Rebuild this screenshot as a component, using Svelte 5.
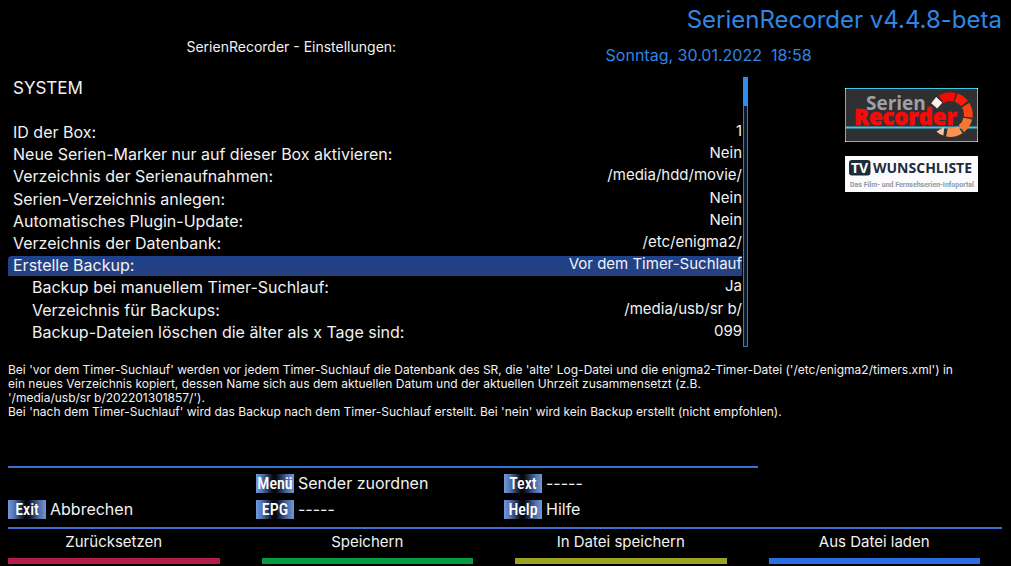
<script>
  const settings = [
    { label: 'ID der Box:', value: '1' },
    { label: 'Neue Serien-Marker nur auf dieser Box aktivieren:', value: 'Nein' },
    { label: 'Verzeichnis der Serienaufnahmen:', value: '/media/hdd/movie/' },
    { label: 'Serien-Verzeichnis anlegen:', value: 'Nein' },
    { label: 'Automatisches Plugin-Update:', value: 'Nein' },
    { label: 'Verzeichnis der Datenbank:', value: '/etc/enigma2/' },
    { label: 'Erstelle Backup:', value: 'Vor dem Timer-Suchlauf' },
    { label: 'Backup bei manuellem Timer-Suchlauf:', value: 'Ja', child: true },
    { label: 'Verzeichnis für Backups:', value: '/media/usb/sr b/', child: true },
    { label: 'Backup-Dateien löschen die älter als x Tage sind:', value: '099', child: true },
  ];
  let selected = $state(6);

  const help = [
    "Bei 'vor dem Timer-Suchlauf' werden vor jedem Timer-Suchlauf die Datenbank des SR, die 'alte' Log-Datei und die enigma2-Timer-Datei ('/etc/enigma2/timers.xml') in",
    'ein neues Verzeichnis kopiert, dessen Name sich aus dem aktuellen Datum und der aktuellen Uhrzeit zusammensetzt (z.B.',
    "'/media/usb/sr b/202201301857/').",
    "Bei 'nach dem Timer-Suchlauf' wird das Backup nach dem Timer-Suchlauf erstellt. Bei 'nein' wird kein Backup erstellt (nicht empfohlen).",
  ];

  const keys = [
    null,
    { key: 'Menü', action: 'Sender zuordnen' },
    { key: 'Text', action: '-----' },
    { key: 'Exit', action: 'Abbrechen' },
    { key: 'EPG', action: '-----' },
    { key: 'Help', action: 'Hilfe' },
  ];

  const actions = [
    { text: 'Zurücksetzen', tone: 'red' },
    { text: 'Speichern', tone: 'green' },
    { text: 'In Datei speichern', tone: 'yellow' },
    { text: 'Aus Datei laden', tone: 'blue' },
  ];

  // One ring piece between two angles, in degrees clockwise from three o'clock
  function piece(a0, a1, inner0 = 13.5, inner1 = 13.5) {
    const p = (r, a) => {
      const t = (a * Math.PI) / 180;
      return `${(105.4 + r * Math.cos(t)).toFixed(2)} ${(26.6 + r * Math.sin(t)).toFixed(2)}`;
    };
    return `M${p(22.3, a0)} A22.3 22.3 0 0 1 ${p(22.3, a1)} L${p(inner1, a1)} A13 13 0 0 0 ${p(inner0, a0)} Z`;
  }
  const ring = [
    { d: 'M86.2 15.2 L91.2 9 L97.3 14.8 L92.2 20.4 Z', fill: '#fff1e8' },
    { d: piece(-121, -76), fill: '#fb0606' },
    { d: piece(-71, -38), fill: '#fb1c08' },
    { d: piece(-32, 8), fill: '#f94310' },
    { d: piece(13, 52), fill: '#fb7430' },
    { d: piece(57, 101), fill: '#fb9350' },
    { d: 'M91.5 43.4 L99.5 38.8 L98.4 47.6 Q94.5 46.6 91.5 43.4 Z', fill: '#f8c29c' },
  ];
</script>

<div class="screen">
  <h1>SerienRecorder v4.4.8-beta</h1>
  <header>
    <h2>SerienRecorder - Einstellungen:</h2>
    <time datetime="2022-01-30T18:58">Sonntag, 30.01.2022&nbsp; 18:58</time>
  </header>

  <main>
    <section class="settings">
      <div class="list">
        <h3>SYSTEM</h3>
        <dl>
          {#each settings as row, i}
            <div class="row" class:child={row.child} class:selected={i === selected}>
              <dt>{row.label}</dt>
              <dd>{row.value}</dd>
            </div>
          {/each}
        </dl>
      </div>
      <div class="scrollbar"><div class="thumb"></div></div>
    </section>

    <aside>
      <svg class="logo" viewBox="0 0 133 54" role="img" aria-label="Serien Recorder">
        <rect x="0.5" y="0.5" width="132" height="53" fill="#303032" stroke="#3cc8e4" />
        <path d="M1 39.5H132" stroke="#3cc8e4" stroke-width="2" />
        <text class="serien" x="21" y="22">Serien</text>
        <text class="recorder" x="9" y="37">Recorder</text>
        {#each ring as part}
          <path d={part.d} fill={part.fill} />
        {/each}
        <path d="M0 0h1v1H0zM132 0h1v1h-1zM0 53h1v1H0zM132 53h1v1h-1z" fill="#fff" />
      </svg>
      <svg class="logo" viewBox="0 0 133 36" role="img" aria-label="TV Wunschliste">
        <rect width="133" height="36" fill="#fcfcfe" />
        <rect x="4" y="4" width="21.5" height="15.6" rx="3" fill="#1d2c3b" />
        <text class="tv" x="6" y="17">TV</text>
        <text class="wunsch" x="28" y="17">WUNSCHLISTE</text>
        <text class="tagline" x="5" y="31">Das Film- und Fernsehserien-Infoportal</text>
      </svg>
    </aside>
  </main>

  <p class="help">
    {#each help as line}
      <span>{line}</span>
    {/each}
  </p>

  <footer>
    <div class="keys">
      {#each keys as item}
        {#if item}
          <button class="key"><kbd>{item.key}</kbd><span>{item.action}</span></button>
        {:else}
          <i></i>
        {/if}
      {/each}
    </div>
    <div class="actions">
      {#each actions as action}
        <button class="action {action.tone}">{action.text}</button>
      {/each}
    </div>
  </footer>
</div>

<style>
  :global(body) {
    margin: 0;
    background: #000;
  }
  .screen {
    display: flex;
    flex-direction: column;
    box-sizing: border-box;
    min-height: 100vh;
    padding: 4px 9px 2px 8px;
    color: #f2f2f2;
    background: #000;
    font-family: Inter, 'Noto Sans', sans-serif;
    font-size: 16px;
  }
  h1, h2, h3, dl, dd, p {
    margin: 0;
    font-weight: 400;
  }
  h1 {
    color: #2f86e4;
    font-size: 24px;
    line-height: 32px;
    text-align: right;
  }
  header {
    display: grid;
    grid-template-columns: 57% 1fr;
    line-height: 22px;
  }
  h2 {
    font-size: 14px;
    line-height: 22px;
    text-align: center;
  }
  time {
    padding: 8px 0 0 31px;
    color: #2f86e4;
  }
  main {
    display: grid;
    grid-template-columns: 1fr 254px;
    padding-top: 11px;
  }
  .settings {
    display: flex;
    gap: 1px;
  }
  .list {
    display: flex;
    flex: 1;
    flex-direction: column;
    padding-bottom: 4px;
  }
  h3 {
    padding: 0 5px 22px;
    font-size: 17px;
    line-height: 22px;
  }
  dl {
    display: grid;
    flex: 1;
    grid-auto-rows: 1fr;
    line-height: 22px;
  }
  .row {
    display: flex;
    justify-content: space-between;
    padding-left: 5px;
  }
  .child {
    padding-left: 24px;
  }
  dd {
    font-size: 15px;
    line-height: 20px;
  }
  .selected {
    margin-top: 2px;
    border-top-left-radius: 4px;
    background: linear-gradient(#1d428c, #27407f);
    line-height: 18px;
  }
  .selected dd {
    line-height: 16px;
  }
  .scrollbar {
    box-sizing: border-box;
    width: 5px;
    min-height: 270px;
    border: 1px solid #3878c0;
    background: #081a30;
  }
  .thumb {
    height: 10%;
    background: #2f8cf0;
    outline: 1px solid #2f8cf0;
  }
  aside {
    display: flex;
    flex-direction: column;
    align-items: flex-start;
    gap: 14px;
    padding: 11px 0 0 97px;
  }
  .logo {
    display: block;
    width: 133px;
  }
  .logo text {
    font-family: 'Open Sans', 'Noto Sans', sans-serif;
    font-weight: 700;
  }
  .logo .serien {
    fill: #a0a0a2;
    font-size: 19px;
  }
  .logo .recorder {
    fill: #fb0808;
    stroke: #fb0808;
    stroke-width: 0.6;
    font-size: 22px;
    font-weight: 800;
  }
  .logo .tv {
    fill: #fff;
    font-size: 14px;
  }
  .logo .wunsch {
    fill: #1d2c3b;
    font-size: 14px;
  }
  .logo .tagline {
    fill: #8f98a3;
    font-family: Roboto, sans-serif;
    font-size: 7px;
  }
  .help {
    padding-top: 16px;
    font-size: 12px;
    line-height: 14px;
  }
  .help span {
    display: block;
    white-space: nowrap;
  }
  footer {
    margin-top: auto;
  }
  .keys {
    display: grid;
    grid-template-columns: repeat(3, 1fr);
    row-gap: 7px;
    box-sizing: border-box;
    width: 750px;
    max-width: 100%;
    padding: 6px 6px 8px 0;
    border-top: 2px solid #3a70d0;
  }
  button {
    padding: 0;
    border: 0;
    color: inherit;
    background: none;
    font: inherit;
    cursor: pointer;
  }
  .key {
    display: flex;
    align-items: center;
    gap: 4px;
    line-height: 19px;
  }
  kbd {
    width: 38px;
    color: #fff;
    background: linear-gradient(90deg, #6f98dc, #5577b5 15%, #05070c 45%, #05070c 52%, #4d6ca8 82%, #7298d8);
    font-family: 'Liberation Sans Narrow', 'Roboto Condensed', Roboto, sans-serif;
    font-size: 16px;
    font-weight: 500;
    text-align: center;
  }
  .actions {
    display: grid;
    grid-template-columns: repeat(4, 1fr);
    gap: 42px;
    padding: 2px 22px 0 0;
    border-top: 2px solid #3a70d0;
  }
  .action {
    padding: 0 0 5px;
    border-bottom: 6px solid;
    font-size: 15px;
    line-height: 22px;
    white-space: nowrap;
  }
  .red { border-color: #b31d48; }
  .green { border-color: #079b40; }
  .yellow { border-color: #9ca31f; }
  .blue { border-color: #286ee4; }
</style>
